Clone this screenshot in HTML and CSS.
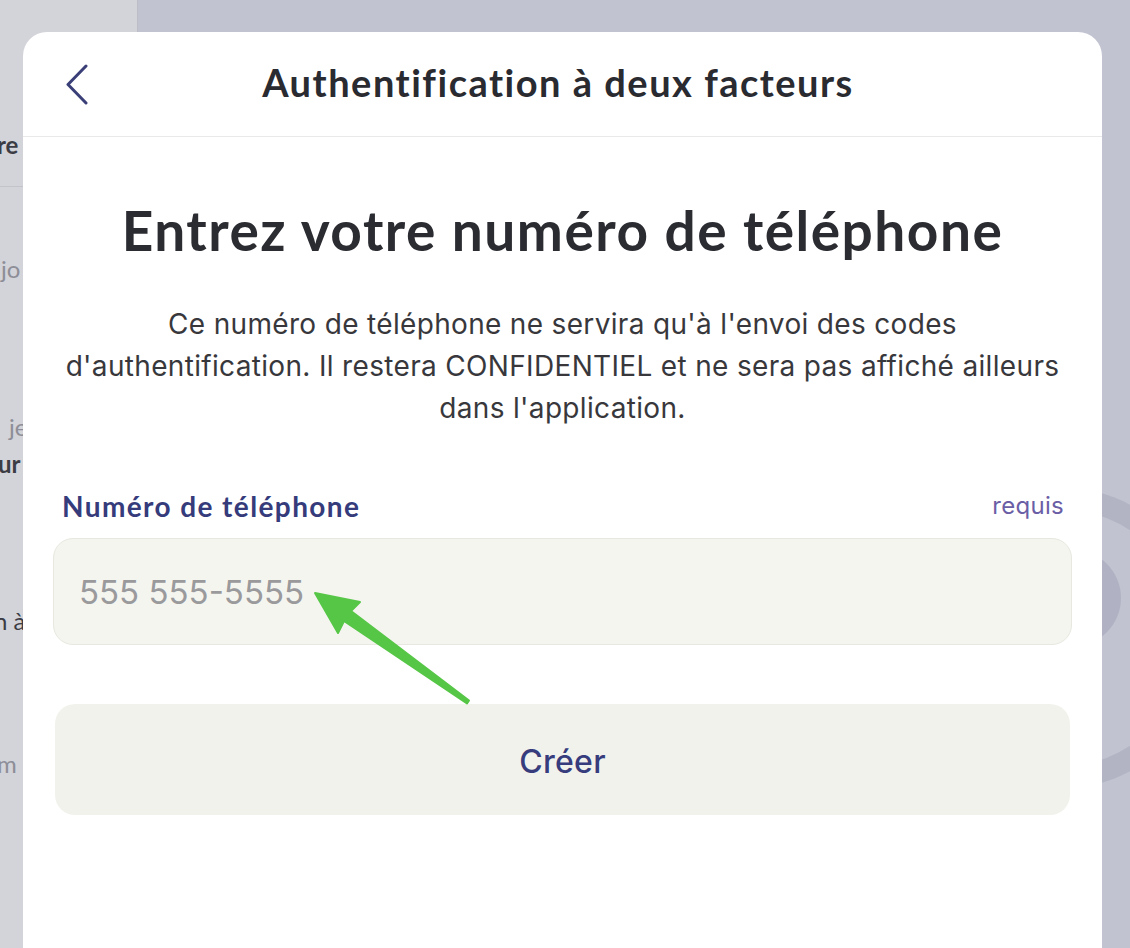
FILE: index.html
```html
<!DOCTYPE html>
<html lang="fr">
<head>
<meta charset="utf-8">
<title>Authentification à deux facteurs</title>
<link rel="stylesheet" href="styles.css">
</head>
<body>
<div class="app">
  <aside class="sidebar">
    <div class="sb-head"><span class="sb-strong sb-re">re</span></div>
    <div class="sb-item sb-muted sb-jo">jo</div>
    <div class="sb-item sb-muted sb-je">je</div>
    <div class="sb-item sb-strong sb-ur">ur</div>
    <div class="sb-item sb-dark sb-na">n à</div>
    <div class="sb-item sb-muted sb-m">m</div>
  </aside>
  <main class="main">
    <svg class="deco" width="260" height="400" viewBox="0 0 260 400" aria-hidden="true">
      <circle cx="60" cy="188" r="140" fill="none" stroke="#b2b4c4" stroke-width="22"/>
      <circle cx="73.5" cy="148" r="48.5" fill="#b0b2c3"/>
    </svg>
  </main>
</div>

<section class="modal">
  <header class="modal-head">
    <button class="back" aria-label="Retour">
      <svg width="26" height="42" viewBox="0 0 26 42"><path d="M23 3 L5 21.5 L23 40" fill="none" stroke="#3a3f78" stroke-width="3" stroke-linecap="round" stroke-linejoin="round"/></svg>
    </button>
    <h1 class="modal-title">Authentification à deux facteurs</h1>
  </header>
  <div class="modal-body">
    <h2 class="heading">Entrez votre numéro de téléphone</h2>
    <p class="desc">Ce numéro de téléphone ne servira qu'à l'envoi des codes d'authentification. Il restera CONFIDENTIEL et ne sera pas affiché ailleurs dans l'application.</p>
    <div class="field-head">
      <label class="label" for="phone">Numéro de téléphone</label>
      <span class="req">requis</span>
    </div>
    <input class="input" id="phone" type="tel" placeholder="555 555-5555">
    <button class="btn">Créer</button>
  </div>
</section>

<svg class="arrow" width="1130" height="948" viewBox="0 0 1130 948" aria-hidden="true">
  <polygon points="315,593 360,602 351,611 469,700.5 467,703.5 344,621 338,633" fill="#56c646" stroke="#56c646" stroke-width="2" stroke-linejoin="round"/>
</svg>
</body>
</html>
```
FILE: styles.css
```css
* { box-sizing: border-box; }
html, body { margin: 0; padding: 0; }
body {
  width: 1130px;
  height: 948px;
  overflow: hidden;
  position: relative;
  background: #c1c3d0;
  font-family: Inter, "Noto Sans", sans-serif;
}
.app { display: flex; height: 948px; }
.sidebar {
  width: 138px;
  background: #d3d3da;
  border-right: 1px solid #bcbdc7;
  display: flex;
  flex-direction: column;
  font-family: Lato, "Noto Sans", sans-serif;
  font-size: 24px;
  white-space: nowrap;
  overflow: hidden;
}
.sb-head {
  height: 187px;
  border-bottom: 1px solid #c3c3cb;
  padding-top: 130px;
}
.sb-item { line-height: 28px; }
.sb-strong { font-weight: 700; color: #3b3c44; }
.sb-muted { color: #8d8e97; }
.sb-dark { color: #3b3c44; }
.sb-re { margin-left: -3px; }
.sb-jo { margin-top: 68px; margin-left: 1px; }
.sb-je { margin-top: 130px; margin-left: 9px; }
.sb-ur { margin-top: 9px; margin-left: -2px; }
.sb-na { margin-top: 129px; margin-left: -6px; }
.sb-m { margin-top: 115px; margin-left: -3px; }
.main { flex: 1; position: relative; }
.deco { position: absolute; left: 861px; top: 450px; }

.modal {
  position: absolute;
  left: 23px;
  top: 32px;
  width: 1079px;
  height: 940px;
  background: #fff;
  border-radius: 24px;
  display: flex;
  flex-direction: column;
}
.modal-head {
  height: 105px;
  border-bottom: 1px solid #e9e9ea;
  display: flex;
  align-items: center;
  justify-content: center;
  padding: 0 9px 4px 0;
  position: relative;
}
.back {
  position: absolute;
  left: 40px;
  top: 31px;
  border: 0;
  background: none;
  padding: 0;
  width: 26px;
  height: 42px;
}
.back svg { display: block; }
.modal-title {
  margin: 0;
  font-family: Lato, "Noto Sans", sans-serif;
  font-weight: 700;
  font-size: 38px;
  letter-spacing: 1.5px;
  color: #2a2b31;
}
.modal-body {
  padding: 0 30px;
  display: flex;
  flex-direction: column;
}
.heading {
  margin: 63px 0 0;
  text-align: center;
  font-family: Lato, "Noto Sans", sans-serif;
  font-weight: 700;
  font-size: 55px;
  letter-spacing: 1.5px;
  line-height: 60px;
  color: #2b2c32;
}
.desc {
  margin: 43px 0 0;
  text-align: center;
  font-size: 28px;
  letter-spacing: 0.33px;
  line-height: 42px;
  color: #38383c;
}
.field-head {
  margin-top: 60px;
  padding: 0 8px 0 9px;
  height: 34px;
  display: flex;
  justify-content: space-between;
  align-items: center;
  line-height: 34px;
}
.label {
  font-family: Lato, "Noto Sans", sans-serif;
  font-weight: 700;
  font-size: 28px;
  letter-spacing: 1.4px;
  color: #353b7b;
}
.req {
  font-size: 24px;
  letter-spacing: 0.3px;
  color: #6a5ea6;
}
.input {
  margin-top: 15px;
  height: 107px;
  width: 100%;
  border: 1px solid #e8e8e0;
  border-radius: 20px;
  background: #f5f5f0;
  padding: 0 25px;
  font-family: Inter, "Noto Sans", sans-serif;
  font-size: 33px;
  color: #333;
  outline: none;
}
.input::placeholder { color: #9a9a9c; }
.btn {
  margin: 59px 2px 0;
  height: 111px;
  padding-top: 5px;
  border: 0;
  border-radius: 20px;
  background: #f2f2ed;
  font-family: Inter, "Noto Sans", sans-serif;
  font-weight: 500;
  font-size: 32px;
  letter-spacing: 0.3px;
  color: #363c7c;
}
.arrow { position: absolute; left: 0; top: 0; pointer-events: none; }
```
